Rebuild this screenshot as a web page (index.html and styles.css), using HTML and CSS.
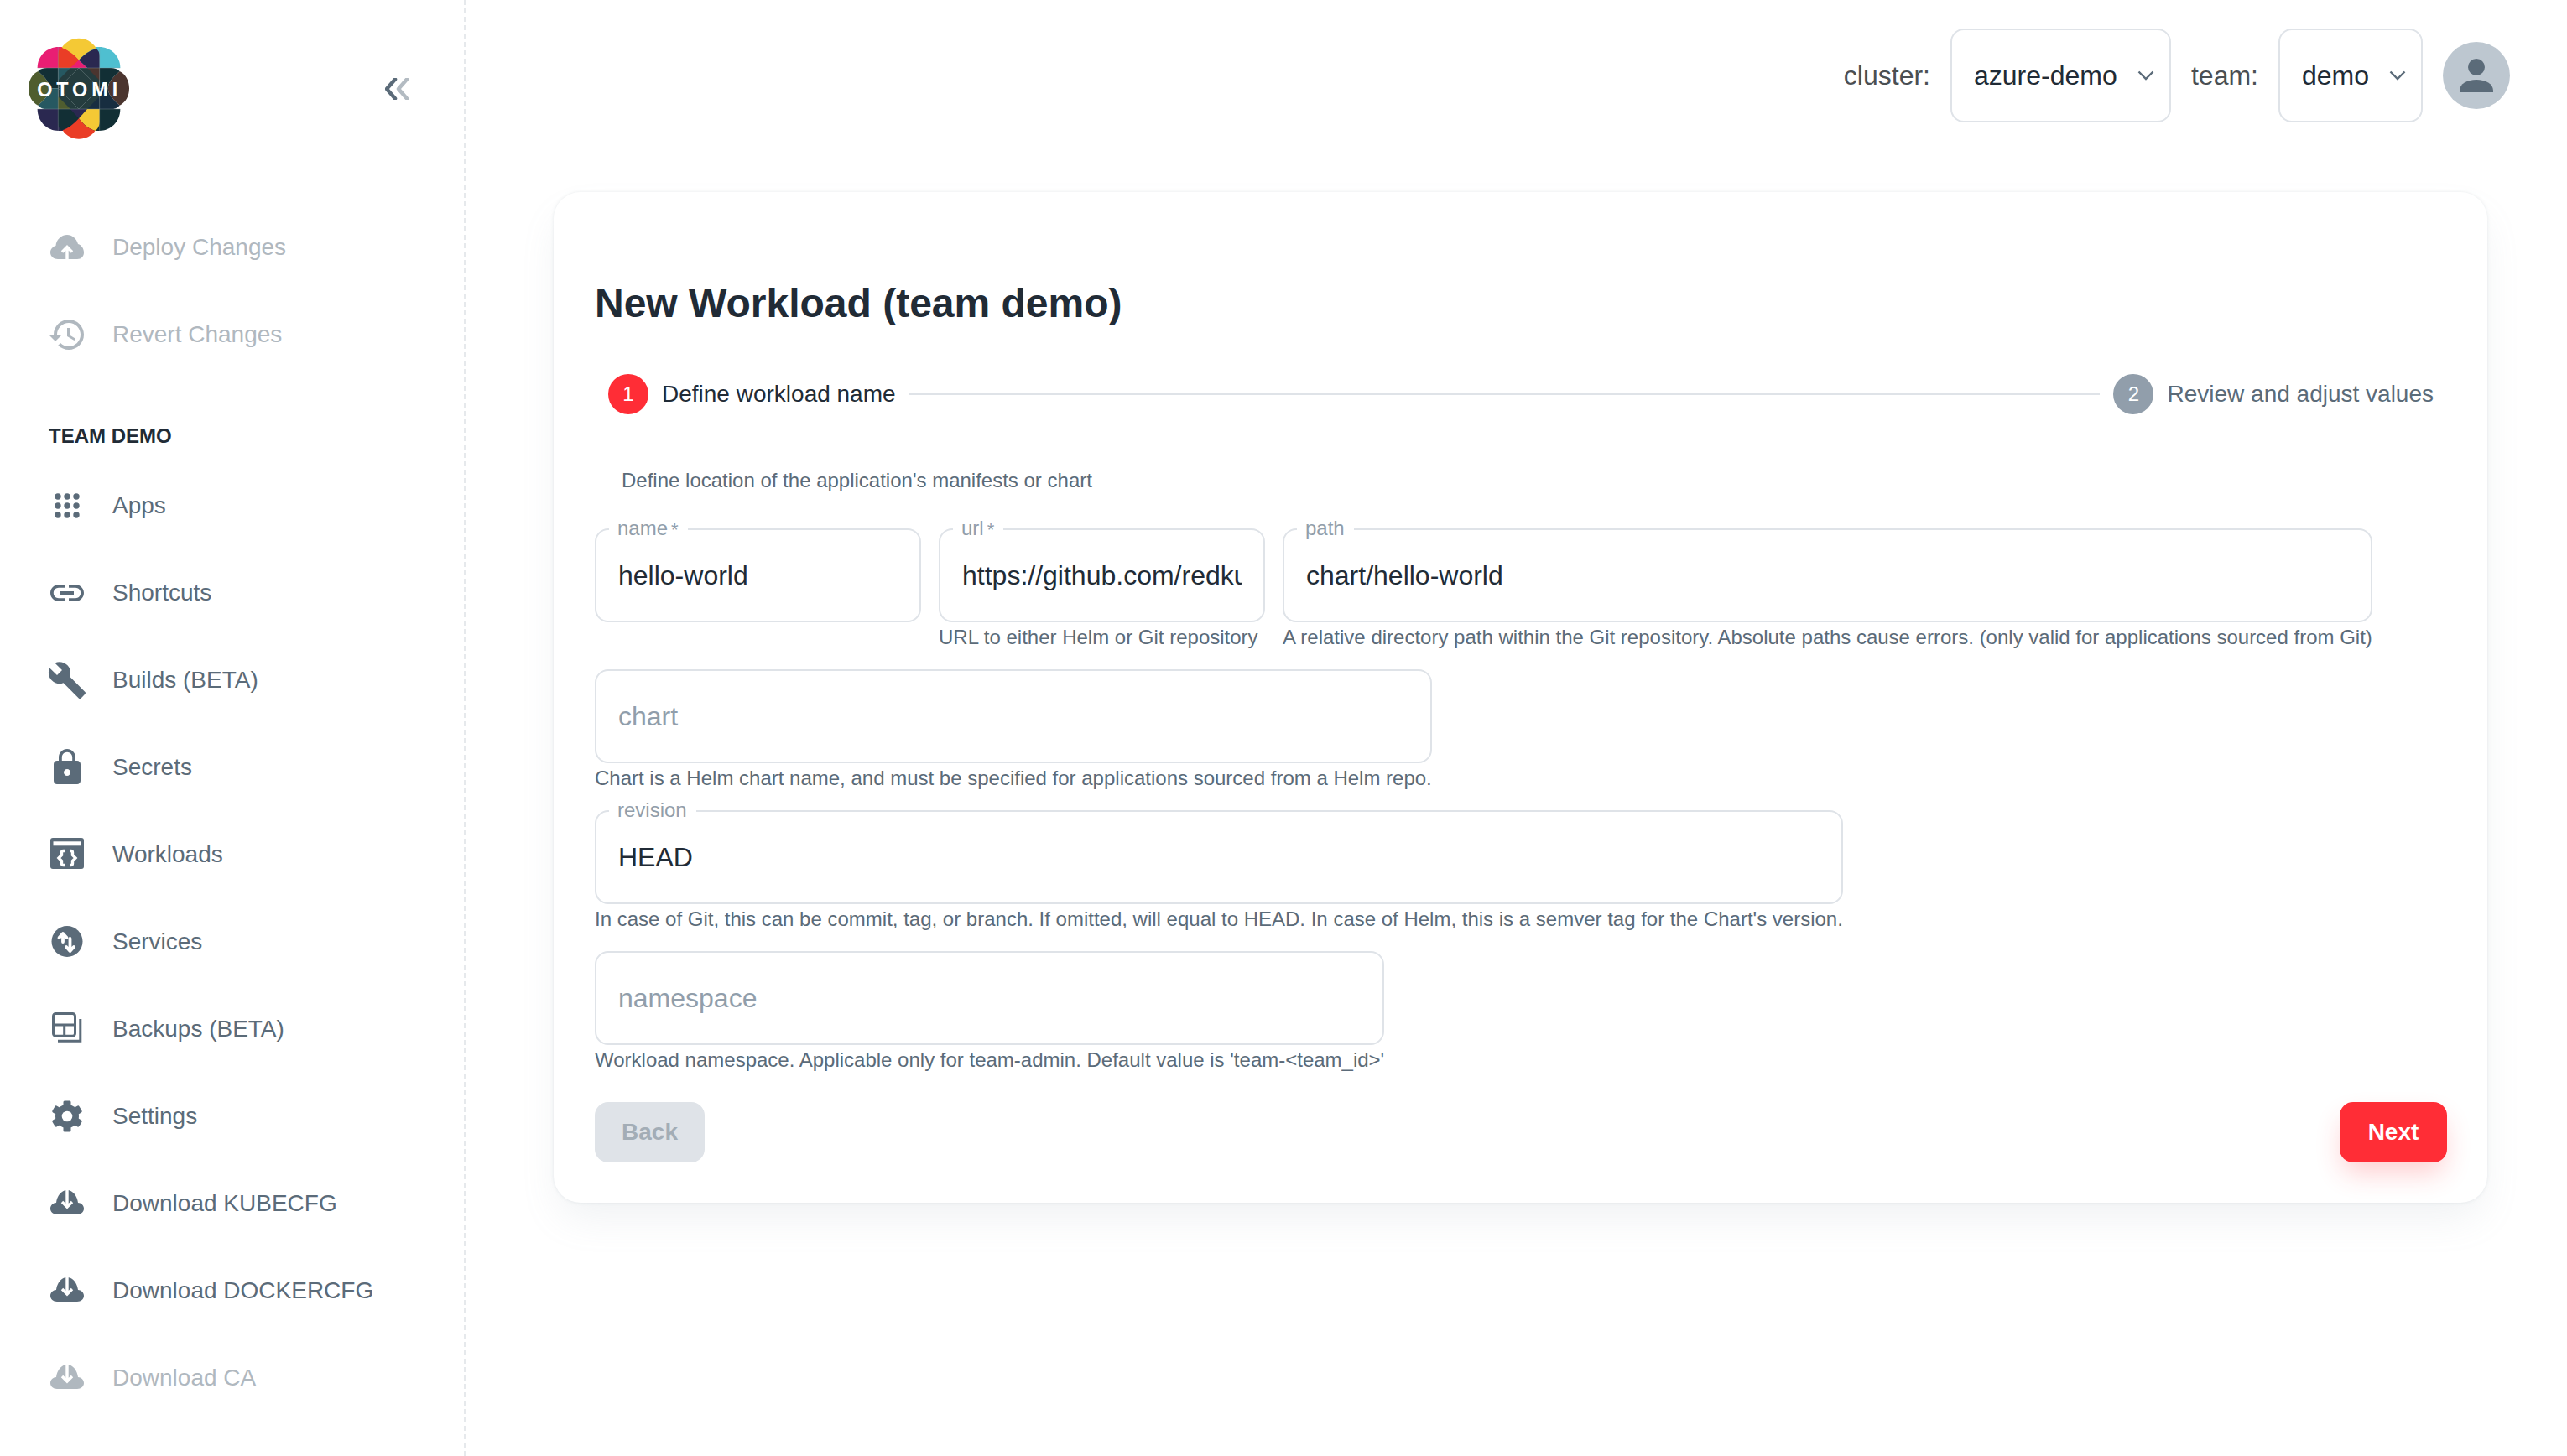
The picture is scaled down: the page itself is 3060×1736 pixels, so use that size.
FILE: index.html
```html
<!DOCTYPE html>
<html lang="en">
<head>
<meta charset="utf-8">
<title>New Workload</title>
<link rel="stylesheet" href="styles.css">
</head>
<body>
<div class="app">
  <aside class="sidebar">
    <div class="brand">
      <svg class="logo" viewBox="0 0 450 450">
        <path fill="#e91e73" d="M74 153V152C74 110 108 78 150 78H222V153Z"/>
        <path fill="#4fbfd0" d="M222 78H294C336 78 370 110 370 152V153H222Z"/>
        <path fill="#2a2850" d="M74 300H222V378H150C108 378 74 345 74 300Z"/>
        <path fill="#122f35" d="M222 300H370C370 345 336 378 294 378H222Z"/>
        <path fill="#f4c935" d="M160 82C175 58 198 47 222 47C246 47 269 58 284 82C262 90 240 105 222 125C204 105 182 90 160 82Z"/>
        <path fill="#ea3d26" d="M148 153V105C148 92 152 85 160 80C185 90 205 105 222 125L192 153Z"/>
        <path fill="#2a2850" d="M222 125C240 105 262 90 284 84C292 90 296 98 296 110V153H252Z"/>
        <path fill="#e91e73" d="M192 153L222 125L252 153Z"/>
        <path fill="#122f35" d="M148 300H192L222 334C205 352 185 370 160 376C152 370 148 362 148 350Z"/>
        <path fill="#2a2850" d="M192 300H252L222 334Z"/>
        <path fill="#f4c935" d="M222 334L252 300H296V345C296 358 292 370 280 378C255 370 238 355 222 334Z"/>
        <path fill="#ea3d26" d="M222 334C238 355 255 370 280 378C268 397 245 407 222 407C199 407 176 397 164 376C185 370 205 352 222 334Z"/>
        <path fill="#4f5d2f" d="M76 165C55 175 42 198 42 226C42 254 55 277 76 287C95 270 118 250 118 226C118 202 95 182 76 165Z"/>
        <path fill="#4b352f" d="M368 165C389 175 402 198 402 226C402 254 389 277 368 287C349 270 326 250 326 226C326 202 349 182 368 165Z"/>
        <path fill="#122f35" d="M76 165C84 156 95 153 108 153H148V226H118C118 202 95 182 76 165Z"/>
        <path fill="#265861" d="M76 287C84 297 95 300 108 300H148V226H118C118 250 95 270 76 287Z"/>
        <path fill="#122f35" d="M368 165C360 156 349 153 336 153H296V226H326C326 202 349 182 368 165Z"/>
        <path fill="#172d40" d="M368 287C360 297 349 300 336 300H296V226H326C326 250 349 270 368 287Z"/>
        <path fill="#243c3e" d="M148 153H296V300H148Z"/>
        <path fill="#265861" d="M148 153H192L148 197Z"/>
        <path fill="#4b352f" d="M252 153H296V197Z"/>
        <path fill="#4f5d2f" d="M148 256L192 300H148Z"/>
        <path fill="#172d40" d="M296 256V300H252Z"/>
        <path fill="none" stroke="#8b9a9c" stroke-width="1.2" d="M148 78V378M296 78V378M74 153H370M74 300H370M148 226L222 153L296 226L222 300Z"/>
        <text class="logo-text" x="224" y="255" text-anchor="middle">OTOMI</text>
      </svg>
      <svg class="collapse" viewBox="0 0 28 26">
        <path class="chev-dark" d="M12 1.5L2 13L12 24.5"/>
        <path class="chev-light" d="M26 1.5L16 13L26 24.5"/>
      </svg>
    </div>
    <nav class="nav">
      <a class="item off"><svg class="ico" viewBox="0 0 48 48"><path d="M13 38C8 38 4 34.5 4 30C4 26 7 23 10.5 22C11 15 17 9 24 9C30 9 35 13 37 20C41 21 44 25.5 44 30C44 34.5 41 38 36 38Z"/><path class="cut" d="M24 38V24M18 29.5l6-6 6 6"/></svg><span>Deploy Changes</span></a>
      <a class="item off"><svg class="ico" viewBox="0 0 24 24"><path d="M13 3c-4.97 0-9 4.03-9 9H1l3.89 3.89.07.14L9 12H6c0-3.87 3.13-7 7-7s7 3.13 7 7-3.13 7-7 7c-1.93 0-3.68-.79-4.94-2.06l-1.42 1.42C8.27 19.99 10.51 21 13 21c4.97 0 9-4.03 9-9s-4.03-9-9-9zm-1 5v5l4.28 2.54.72-1.21-3.5-2.08V8H12z"/></svg><span>Revert Changes</span></a>
      <div class="section">TEAM DEMO</div>
      <a class="item"><svg class="ico" viewBox="0 0 48 48"><circle cx="13" cy="13" r="3.7"/><circle cx="24" cy="13" r="3.7"/><circle cx="35" cy="13" r="3.7"/><circle cx="13" cy="24" r="3.7"/><circle cx="24" cy="24" r="3.7"/><circle cx="35" cy="24" r="3.7"/><circle cx="13" cy="35" r="3.7"/><circle cx="24" cy="35" r="3.7"/><circle cx="35" cy="35" r="3.7"/></svg><span>Apps</span></a>
      <a class="item"><svg class="ico" viewBox="0 0 24 24"><path d="M3.9 12c0-1.71 1.39-3.1 3.1-3.1h4V7H7c-2.76 0-5 2.24-5 5s2.24 5 5 5h4v-1.9H7c-1.71 0-3.1-1.39-3.1-3.1zM8 13h8v-2H8v2zm9-6h-4v1.9h4c1.71 0 3.1 1.39 3.1 3.1s-1.39 3.1-3.1 3.1h-4V17h4c2.76 0 5-2.24 5-5s-2.24-5-5-5z"/></svg><span>Shortcuts</span></a>
      <a class="item"><svg class="ico" viewBox="0 0 24 24"><path d="M22.7 19l-9.1-9.1c.9-2.3.4-5-1.5-6.9-2-2-5-2.4-7.4-1.3L9 6 6 9 1.6 4.7C.4 7.1.9 10.1 2.9 12.1c1.9 1.9 4.6 2.4 6.9 1.5l9.1 9.1c.4.4 1 .4 1.4 0l2.3-2.3c.5-.4.5-1.1.1-1.4z"/></svg><span>Builds (BETA)</span></a>
      <a class="item"><svg class="ico" viewBox="0 0 24 24"><path d="M18 8h-1V6c0-2.76-2.24-5-5-5S7 3.24 7 6v2H6c-1.1 0-2 .9-2 2v10c0 1.1.9 2 2 2h12c1.1 0 2-.9 2-2V10c0-1.1-.9-2-2-2zm-6 9c-1.1 0-2-.9-2-2s.9-2 2-2 2 .9 2 2-.9 2-2 2zm3.1-9H8.9V6c0-1.71 1.39-3.1 3.1-3.1 1.71 0 3.1 1.39 3.1 3.1v2z"/></svg><span>Secrets</span></a>
      <a class="item"><svg class="ico" viewBox="0 0 48 48"><rect x="4" y="4" width="40" height="37" rx="3"/><rect class="slit" x="7.500" y="8.300" width="33" height="5"/><path class="cut" d="M21 19.500h-1.500c-1.500 0-2 1-2 2v3l-3.500 3.500 3.500 3.500v3c0 1 .5 2 2 2H21M27 19.500h1.500c1.500 0 2 1 2 2v3l3.500 3.500-3.500 3.500v3c0 1-.5 2-2 2H27"/></svg><span>Workloads</span></a>
      <a class="item"><svg class="ico" viewBox="0 0 48 48"><circle cx="24" cy="23.500" r="18.500"/><path class="cut round" d="M19 24V14.500M14.500 19l4.500-5 4.500 5M27.500 20V34.500M23 30l4.500 5 4.500-5"/></svg><span>Services</span></a>
      <a class="item"><svg class="ico" viewBox="0 0 48 48"><rect class="line" x="7.500" y="5.500" width="26" height="26.700" rx="3"/><path class="line" d="M7.500 19H33.500M20.700 19V32M13 38.200H39.800V12"/></svg><span>Backups (BETA)</span></a>
      <a class="item"><svg class="ico" viewBox="0 0 48 48"><circle cx="24" cy="24" r="14"/><rect x="19.500" y="5.500" width="9" height="37" rx="1.500"/><rect x="19.500" y="5.500" width="9" height="37" rx="1.500" transform="rotate(60 24 24)"/><rect x="19.500" y="5.500" width="9" height="37" rx="1.500" transform="rotate(120 24 24)"/><circle class="hole" cx="24" cy="24" r="6.300"/></svg><span>Settings</span></a>
      <a class="item"><svg class="ico" viewBox="0 0 48 48"><path d="M12 37C7.500 37 4 34 4 30C4 26 7.500 23 11 23C12 15 17 8 24 8C31 8 36 15 37 23C40.500 23 44 26 44 30C44 34 40.500 37 36 37Z"/><path class="cut" d="M24 8V27.500M18 22l6 6 6-6"/></svg><span>Download KUBECFG</span></a>
      <a class="item"><svg class="ico" viewBox="0 0 48 48"><path d="M12 37C7.500 37 4 34 4 30C4 26 7.500 23 11 23C12 15 17 8 24 8C31 8 36 15 37 23C40.500 23 44 26 44 30C44 34 40.500 37 36 37Z"/><path class="cut" d="M24 8V27.500M18 22l6 6 6-6"/></svg><span>Download DOCKERCFG</span></a>
      <a class="item off"><svg class="ico" viewBox="0 0 48 48"><path d="M12 37C7.500 37 4 34 4 30C4 26 7.500 23 11 23C12 15 17 8 24 8C31 8 36 15 37 23C40.500 23 44 26 44 30C44 34 40.500 37 36 37Z"/><path class="cut" d="M24 8V27.500M18 22l6 6 6-6"/></svg><span>Download CA</span></a>
    </nav>
  </aside>
  <main class="main">
    <header class="topbar">
      <span class="top-label">cluster:</span>
      <div class="select sel-cluster"><span>azure-demo</span><svg class="caret" viewBox="0 0 20 12"><path d="M1.500 1.500l8.500 8.500 8.500-8.500"/></svg></div>
      <span class="top-label">team:</span>
      <div class="select sel-team"><span>demo</span><svg class="caret" viewBox="0 0 20 12"><path d="M1.500 1.500l8.500 8.500 8.500-8.500"/></svg></div>
      <div class="avatar"><svg viewBox="0 0 80 80"><circle cx="40" cy="30" r="10"/><path d="M20 60V58C20 50 29 45 40 45C51 45 60 50 60 58V60Z"/></svg></div>
    </header>
    <section class="card">
      <h1 class="title">New Workload (team demo)</h1>
      <div class="stepper">
        <span class="dot dot-on">1</span><span class="step-label on">Define workload name</span>
        <span class="step-line"></span>
        <span class="dot">2</span><span class="step-label">Review and adjust values</span>
      </div>
      <p class="desc">Define location of the application's manifests or chart</p>
      <div class="row">
        <div class="field fixed">
          <div class="box"><span class="legend">name<sup>*</sup></span><span class="value">hello-world</span></div>
        </div>
        <div class="field fixed">
          <div class="box"><span class="legend">url<sup>*</sup></span><span class="value clip">https://github.com/redkubes/otomi-charts</span></div>
          <div class="help">URL to either Helm or Git repository</div>
        </div>
        <div class="field">
          <div class="box"><span class="legend">path</span><span class="value">chart/hello-world</span></div>
          <div class="help">A relative directory path within the Git repository. Absolute paths cause errors. (only valid for applications sourced from Git)</div>
        </div>
      </div>
      <div class="row">
        <div class="field">
          <div class="box"><span class="value ph">chart</span></div>
          <div class="help">Chart is a Helm chart name, and must be specified for applications sourced from a Helm repo.</div>
        </div>
      </div>
      <div class="row">
        <div class="field">
          <div class="box"><span class="legend">revision</span><span class="value">HEAD</span></div>
          <div class="help">In case of Git, this can be commit, tag, or branch. If omitted, will equal to HEAD. In case of Helm, this is a semver tag for the Chart's version.</div>
        </div>
      </div>
      <div class="row">
        <div class="field">
          <div class="box"><span class="value ph">namespace</span></div>
          <div class="help">Workload namespace. Applicable only for team-admin. Default value is 'team-&lt;team_id&gt;'</div>
        </div>
      </div>
      <div class="actions">
        <button class="btn back">Back</button>
        <button class="btn next">Next</button>
      </div>
    </section>
  </main>
</div>
</body>
</html>
```
FILE: styles.css
```css
* { box-sizing: border-box; }
html, body { margin: 0; height: 100%; }
body { font-family: "Liberation Sans", Arial, sans-serif; color: #212b36; background: #fff; }
.app { display: flex; height: 1736px; overflow: hidden; }

.sidebar { width: 555px; flex: none; border-right: 2px dashed #e6e9ec; }
.brand { display: flex; align-items: flex-start; height: 243px; padding: 30px 0 0 20px; }
.logo { width: 150px; height: 150px; flex: none; }
.logo-text { font: 700 70px "Liberation Sans", Arial, sans-serif; letter-spacing: 15px; fill: #fff; }
.collapse { width: 28px; height: 26px; margin: 63px 0 0 289px; fill: none; }
.chev-dark { stroke: #5b6b79; stroke-width: 4.500; stroke-linecap: round; stroke-linejoin: round; }
.chev-light { stroke: #b3bbc2; stroke-width: 4.500; stroke-linecap: round; stroke-linejoin: round; }

.nav { display: flex; flex-direction: column; }
.item { display: flex; align-items: center; height: 104px; padding-left: 56px; font-size: 28px; color: #5b6b79; }
.item.off { color: #b0b8bf; }
.ico { width: 48px; height: 48px; flex: none; margin-right: 30px; fill: currentColor; }
.cut { fill: none; stroke: #fff; stroke-width: 3.400; }
.round { stroke-width: 3.800; stroke-linecap: round; stroke-linejoin: round; }
.slit { fill: #fff; }
.hole { fill: #fff; }
.line { fill: none; stroke: currentColor; stroke-width: 3; }
.section { height: 100px; padding: 55px 0 0 58px; font-size: 24px; line-height: 28px; font-weight: 700; color: #212b36; }

.main { flex: 1; display: flex; flex-direction: column; padding-left: 105px; padding-right: 95px; }
.topbar { display: flex; align-items: center; height: 180px; margin-right: -27px; justify-content: flex-end; }
.top-label { font-size: 32px; color: #4b4f53; margin-right: 24px; }
.select { display: flex; align-items: center; height: 112px; border: 2px solid #dfe3e8; border-radius: 16px; margin-right: 24px; padding: 0 18px 0 26px; font-size: 32px; justify-content: space-between; }
.sel-cluster { width: 263px; }
.sel-team { width: 172px; }
.caret { width: 20px; height: 12px; fill: none; stroke: #5b6b79; stroke-width: 2.400; }
.avatar { width: 80px; height: 80px; border-radius: 50%; background: #bdc7d0; }
.avatar svg { display: block; width: 80px; height: 80px; fill: #5b6b79; }

.card { background: #fff; border-radius: 32px; padding: 94px 50px 48px 49px; margin-top: 49px; width: 2305px; height: 1205px; box-shadow: 0 0 4px rgba(145,158,171,.2), 0 24px 48px -8px rgba(145,158,171,.14); }
.title { margin: 0; height: 78px; font-size: 48px; line-height: 78px; font-weight: 700; }
.stepper { display: flex; align-items: center; height: 48px; margin-top: 45px; padding-left: 16px; padding-right: 14px; }
.dot { width: 48px; height: 48px; flex: none; border-radius: 50%; background: #919eab; color: #fff; font-size: 24px; display: flex; align-items: center; justify-content: center; }
.dot-on { background: #ff2d36; }
.step-label { font-size: 28px; margin-left: 16px; color: #5b6b79; }
.step-label.on { color: #212b36; }
.step-line { flex: 1; height: 2px; background: #dfe3e8; margin: 0 16px; }
.desc { margin: 64px 0 0 32px; height: 30px; font-size: 24px; line-height: 30px; color: #5b6b79; }
.row { display: flex; gap: 21px; height: 168px; }
.field { flex: none; }
.fixed { width: 389px; }
.box { position: relative; display: flex; align-items: center; height: 112px; border: 2px solid #dfe3e8; border-radius: 16px; padding: 0 26px; }
.desc + .row { margin-top: 42px; }
.legend { position: absolute; left: 15px; top: -14px; padding: 0 11px 0 10px; background: #fff; font-size: 24px; line-height: 24px; color: #919eab; }
.legend sup { font-size: 22px; line-height: 0; vertical-align: -1px; margin-left: 4px; }
.value { font-size: 32px; color: #212b36; white-space: nowrap; }
.clip { overflow: hidden; }
.ph { color: #919eab; }
.help { margin-top: 3px; font-size: 24px; line-height: 30px; color: #5b6b79; white-space: nowrap; }
.actions { display: flex; justify-content: space-between; margin: 12px -2px 0 0; }
.btn { height: 72px; border: 0; border-radius: 16px; font: 700 28px "Liberation Sans", Arial, sans-serif; }
.back { width: 131px; background: #dfe3e8; color: #a3adb6; }
.next { width: 128px; background: #ff2d36; color: #fff; box-shadow: 0 16px 32px -4px rgba(255,45,54,.24); }
```
